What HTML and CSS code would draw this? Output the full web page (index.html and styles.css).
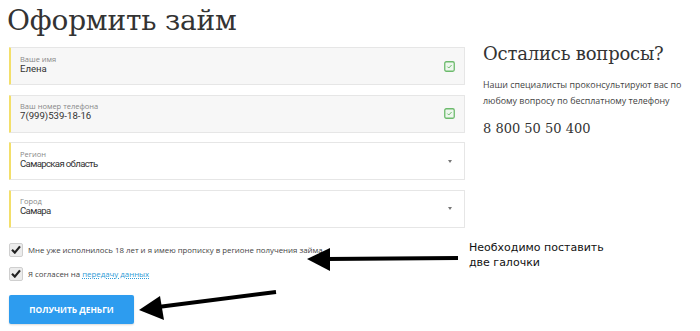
FILE: index.html
```html
<!DOCTYPE html>
<html lang="ru">
<head>
<meta charset="utf-8">
<link rel="stylesheet" href="styles.css">
</head>
<body>
<div class="page">
  <div class="left">
    <h1 class="title">Оформить займ</h1>
    <div class="fields">
      <div class="field filled">
        <div class="field-text">
          <div class="label">Ваше имя</div>
          <div class="value">Елена</div>
        </div>
        <svg class="ok" width="11" height="11" viewBox="0 0 11 11"><rect x="0.75" y="0.75" width="9.5" height="9.5" rx="1.5" fill="#eef7ee" stroke="#6dbb6d" stroke-width="1.3"/><path d="M3.4 5.6 L4.8 7 L7.6 4" fill="none" stroke="#6dbb6d" stroke-width="1"/></svg>
      </div>
      <div class="field filled">
        <div class="field-text">
          <div class="label">Ваш номер телефона</div>
          <div class="value">7(999)539-18-16</div>
        </div>
        <svg class="ok" width="11" height="11" viewBox="0 0 11 11"><rect x="0.75" y="0.75" width="9.5" height="9.5" rx="1.5" fill="#eef7ee" stroke="#6dbb6d" stroke-width="1.3"/><path d="M3.4 5.6 L4.8 7 L7.6 4" fill="none" stroke="#6dbb6d" stroke-width="1"/></svg>
      </div>
      <div class="field">
        <div class="field-text">
          <div class="label">Регион</div>
          <div class="value select-value">Самарская область</div>
        </div>
        <span class="caret"></span>
      </div>
      <div class="field">
        <div class="field-text">
          <div class="label">Город</div>
          <div class="value select-value">Самара</div>
        </div>
        <span class="caret"></span>
      </div>
    </div>
    <div class="checks">
      <div class="check-row">
        <span class="box"><svg width="10" height="9" viewBox="0 0 10 9"><path d="M1 4.8 L3.8 7.6 L9 1.4" fill="none" stroke="#222" stroke-width="2.2"/></svg></span>
        <span class="check-text">Мне уже исполнилось 18 лет и я имею прописку в регионе получения займа</span>
      </div>
      <div class="check-row">
        <span class="box"><svg width="10" height="9" viewBox="0 0 10 9"><path d="M1 4.8 L3.8 7.6 L9 1.4" fill="none" stroke="#222" stroke-width="2.2"/></svg></span>
        <span class="check-text">Я согласен на <a class="link" href="#">передачу данных</a></span>
      </div>
    </div>
    <button class="submit">ПОЛУЧИТЬ ДЕНЬГИ</button>
  </div>
  <div class="right">
    <h2 class="q-title">Остались вопросы?</h2>
    <p class="q-text">Наши специалисты проконсультируют вас по любому вопросу по бесплатному телефону</p>
    <div class="q-phone">8 800 50 50 400</div>
    <div class="note">Необходимо поставить<br>две галочки</div>
  </div>
</div>
<svg class="arrows" width="700" height="331" viewBox="0 0 700 331">
  <line x1="458" y1="258" x2="326" y2="259" stroke="#000" stroke-width="4"/>
  <polygon points="307,259 330,248 330,271" fill="#000"/>
  <line x1="276" y1="292" x2="158" y2="307" stroke="#000" stroke-width="4"/>
  <polygon points="139,310 160,296 164,320" fill="#000"/>
</svg>
</body>
</html>
```
FILE: styles.css
```css
html, body {
  margin: 0;
  padding: 0;
  background: #fff;
}
body {
  width: 700px;
  height: 331px;
  overflow: hidden;
  position: relative;
  font-family: "Open Sans", "Noto Sans", sans-serif;
  color: #333;
}
.page {
  display: flex;
  padding-left: 9px;
}
.left {
  width: 456px;
  display: flex;
  flex-direction: column;
}
.title {
  margin: 0 0 0 -2px;
  height: 47px;
  font-family: "DejaVu Serif", serif;
  font-weight: normal;
  font-size: 28px;
  line-height: 41px;
  color: #333;
  letter-spacing: -0.2px;
}
.fields {
  display: flex;
  flex-direction: column;
  gap: 9.6px;
}
.field {
  box-sizing: border-box;
  height: 38px;
  border: 1px solid #e6e6e6;
  border-left: 2px solid #f3df6a;
  background: #fff;
  display: flex;
  align-items: center;
  padding: 0 9px 0 9px;
  border-radius: 1px;
}
.field.filled {
  background: #f7f7f7;
}
.field-text {
  flex: 1;
  align-self: flex-start;
  display: flex;
  flex-direction: column;
  padding-top: 6.5px;
}
.label {
  font-size: 7.5px;
  line-height: 8px;
  color: #888;
}
.value {
  font-family: Roboto, "Open Sans", sans-serif;
  font-size: 9.6px;
  line-height: 11px;
  color: #333;
}
.select-value {
  letter-spacing: -0.65px;
}
.ok {
  display: block;
}
.caret {
  width: 0;
  height: 0;
  border-left: 2.5px solid transparent;
  border-right: 2.5px solid transparent;
  border-top: 3.5px solid #777;
  margin-right: 3px;
}
.checks {
  margin-top: 15px;
  display: flex;
  flex-direction: column;
  gap: 10px;
}
.check-row {
  display: flex;
  align-items: center;
  height: 14px;
}
.box {
  box-sizing: border-box;
  width: 14px;
  height: 14px;
  border: 1px solid #cfcfcf;
  border-radius: 2px;
  background: #ececec;
  display: flex;
  align-items: center;
  justify-content: center;
  margin-right: 5px;
}
.box svg {
  display: block;
}
.check-text {
  font-size: 7.85px;
  color: #444;
  white-space: nowrap;
}
.link {
  color: #2f9bd6;
  text-decoration: underline;
  text-decoration-style: dotted;
}
.submit {
  margin-top: 14px;
  width: 125px;
  height: 29px;
  border: none;
  border-radius: 2px;
  background: #2d9cef;
  color: #fff;
  font-family: "Open Sans", "Noto Sans", sans-serif;
  font-weight: bold;
  font-size: 8.4px;
  padding: 0;
  box-shadow: 0 1px 2px rgba(0,0,0,0.15);
}
.right {
  margin-left: 18px;
  display: flex;
  flex-direction: column;
}
.q-title {
  margin: 42px 0 0 0;
  font-family: "DejaVu Serif", serif;
  font-weight: normal;
  font-size: 18px;
  line-height: 24px;
  color: #333;
  letter-spacing: -0.2px;
}
.q-text {
  margin: 11px 0 0 0;
  width: 210px;
  font-size: 8.9px;
  line-height: 16px;
  color: #444;
}
.q-phone {
  margin-top: 10px;
  font-family: "DejaVu Serif", serif;
  font-size: 13px;
  line-height: 20px;
  color: #333;
}
.note {
  margin-top: 101px;
  margin-left: -14px;
  font-family: "DejaVu Sans", sans-serif;
  font-size: 11px;
  line-height: 15px;
  color: #111;
}
.arrows {
  position: absolute;
  left: 0;
  top: 0;
  pointer-events: none;
}
```
